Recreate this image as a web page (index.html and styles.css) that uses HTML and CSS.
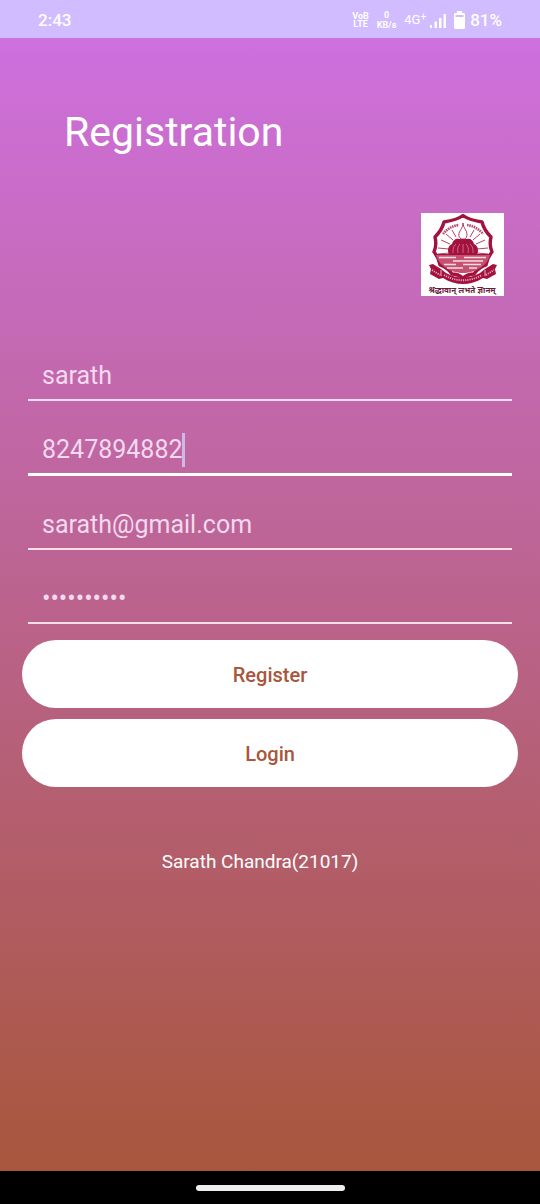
FILE: index.html
```html
<!DOCTYPE html>
<html lang="en">
<head>
<meta charset="utf-8">
<meta name="viewport" content="width=device-width, initial-scale=1">
<title>Registration</title>
<link rel="stylesheet" href="styles.css">
</head>
<body>
<header class="status">
  <span class="clock">2:43</span>
  <div class="indicators">
    <span class="stack volte"><span>VoB</span><span>LTE</span></span>
    <span class="stack rate"><span>0</span><span>KB/s</span></span>
    <span class="network">4G<sup class="plus">+</sup></span>
    <svg class="signal" viewBox="0 0 16 15" aria-hidden="true"><path d="M0 12h2v3H0zM4.500 8.500h2.500V15H4.500zM9 5h2.500v10H9zM13.500 1H16v14h-2.500z" fill="#fff"/></svg>
    <svg class="battery" viewBox="0 0 11 18" aria-hidden="true"><path fill-rule="evenodd" d="M3 0h5v2h1.500Q11 2 11 3.500v13Q11 18 9.500 18h-8Q0 18 0 16.500v-13Q0 2 1.500 2H3zM1.500 4v2h8V4z" fill="#fff"/></svg>
    <span class="percent">81%</span>
  </div>
</header>
<main class="screen">
  <h1 class="title">Registration</h1>
  <svg class="emblem" viewBox="0 0 83 83" role="img" aria-label="University emblem">
    <rect width="83" height="83" fill="#fff"/>
    <path d="M42 2.500Q48 7 61 9q2 8 9 15-2 8 1 15-5 6-6 13-8 3-12 9-6 0-11 4-5-4-11-4-4-6-12-9-1-7-6-13 3-7 1-15 7-7 9-15Q36 7 42 2.500z" fill="#fff" stroke="#a3123f" stroke-width="3.400" stroke-linejoin="round"/>
    <g fill="none" stroke="#a3123f">
      <path d="M22 21a24 24 0 0 1 16-9m8 0a24 24 0 0 1 16 9" stroke-width="2.600" stroke-dasharray="1.600 .7" opacity=".75"/>
      <path d="M35 24l-4-7m1 10l-7-6m4 10l-9-4m8 9l-11-1m11 5l-11 1m32-17l4-7m-1 10l7-6m-4 10l9-4m-8 9l11-1m-11 5l11 1" stroke-width=".8"/>
    </g>
    <path d="M28 42c-2-5-1-9 3-11 1-4 4-6 7-5h8c3-1 6 1 7 5 4 2 5 6 3 11z" fill="#a3123f"/>
    <path d="M42 10c0 5 4 7 4 11 0 3-1 4-2 5h-4c-1-1-3-3-2-6 1-3 4-5 4-10z" fill="#fff" stroke="#a3123f" stroke-width=".8"/>
    <path d="M32 40c0-4 0-6 3-9m2 9c-1-4 0-7 2-9m3 9v-9m5 9c1-4 0-7-2-9m7 9c0-4 0-6-3-9" fill="none" stroke="#d97c96" stroke-width=".8"/>
    <path d="M15 42h54c-2 9-13 18-27 18S17 51 15 42z" fill="#c4516f"/>
    <path d="M18 44.500h17m8 0h22M32 48h30M23 51.500h12m7 0h18M26 55h16m6 0h8" stroke="#f7dde4" stroke-width="1.300"/>
    <path d="M15 41.500h54" stroke="#a3123f" stroke-width="1.200"/>
    <path d="M8 52l4-1 8 5 5 4c11 6 23 6 34 0l5-4 8-5 4 1-2 4 1 5-9 5-4-1c-13 8-27 8-40 0l-4 1-9-5 1-5z" fill="#a3123f"/>
    <path d="M11 57l8 5m4 0c12 7 26 7 38 0m4 0l8-5" fill="none" stroke="#e9a4b8" stroke-width="1.800" stroke-dasharray="1.200 1"/>
    <path d="M20 57v6m44-6v6" fill="none" stroke="#fff" stroke-width=".7"/>
    <text class="motto" x="41" y="80" text-anchor="middle">श्रद्धावान् लभते ज्ञानम्</text>
  </svg>
  <form class="form">
    <div class="fields">
      <label class="field"><input class="input" type="text" aria-label="Name" value="sarath"></label>
      <label class="field active"><input class="input phone" type="tel" aria-label="Phone" value="8247894882"><span class="caret"></span></label>
      <label class="field"><input class="input" type="email" aria-label="Email" value="sarath@gmail.com"></label>
      <label class="field"><input class="input" type="password" aria-label="Password" value="abcdefghij"></label>
    </div>
    <div class="actions">
      <button class="button" type="button">Register</button>
      <button class="button" type="button">Login</button>
    </div>
  </form>
  <p class="credit">Sarath Chandra(21017)</p>
</main>
<footer class="navbar"><span class="handle"></span></footer>
</body>
</html>
```
FILE: styles.css
```css
* { box-sizing: border-box; }
body {
  margin: 0;
  min-height: 100vh;
  display: flex;
  flex-direction: column;
  font-family: Roboto, "Noto Sans", sans-serif;
  color: #fff;
}
.status {
  display: flex;
  justify-content: space-between;
  align-items: center;
  height: 38px;
  padding: 2px 38px 0;
  background: #d1bcff;
  font-size: 17px;
  font-weight: 500;
}
.indicators { display: flex; align-items: center; gap: 8px; }
.stack {
  display: flex;
  flex-direction: column;
  align-items: center;
  font-size: 9px;
  line-height: 8px;
  font-weight: 700;
}
.rate { line-height: 10px; }
.network { font-size: 13px; line-height: 16px; font-weight: 400; }
.plus { font-size: 10px; line-height: 0; vertical-align: 4px; }
.signal { width: 16px; height: 15px; margin-left: -4px; }
.battery { width: 11px; height: 18px; }
.percent { margin-left: -3px; }
.screen {
  flex: 1;
  display: flex;
  flex-direction: column;
  padding: 69px 22px 0;
  background: linear-gradient(#ce70de, #a8563c);
}
.title {
  margin: 0 0 56px 42px;
  font-size: 41px;
  line-height: 50px;
  font-weight: 400;
}
.emblem { width: 83px; height: 83px; margin-right: 14px; align-self: flex-end; }
.motto { font: 700 8px "Noto Sans", sans-serif; fill: #6b1c3a; }
.form { margin-top: 43px; }
.fields { display: grid; gap: 12px; padding: 0 6px; }
.field {
  display: flex;
  align-items: center;
  height: 62px;
  padding: 14px 14px 0;
  border-bottom: 2px solid rgba(255, 255, 255, 0.8);
}
.active { height: 63px; border-bottom: 3px solid #fff; }
.input {
  flex: 1;
  min-width: 0;
  padding: 0;
  border: 0;
  outline: 0;
  background: none;
  color: #f3d9ef;
  font: 400 25px/34px Roboto, sans-serif;
}
.phone { flex: none; width: 140px; }
.caret { width: 3px; height: 34px; background: #cdb9e6; }
.actions { display: grid; gap: 11px; margin-top: 16px; }
.button {
  height: 68px;
  padding: 2px 0 0;
  border: 0;
  border-radius: 34px;
  background: #fff;
  color: #a8563c;
  font: 500 20px/24px Roboto, sans-serif;
}
.credit {
  margin: 63px 20px 0 0;
  font-size: 19px;
  line-height: 24px;
  text-align: center;
}
.navbar {
  display: flex;
  align-items: center;
  justify-content: center;
  height: 33px;
  background: #000;
}
.handle { width: 149px; height: 6px; border-radius: 3px; background: #eee; }
```
